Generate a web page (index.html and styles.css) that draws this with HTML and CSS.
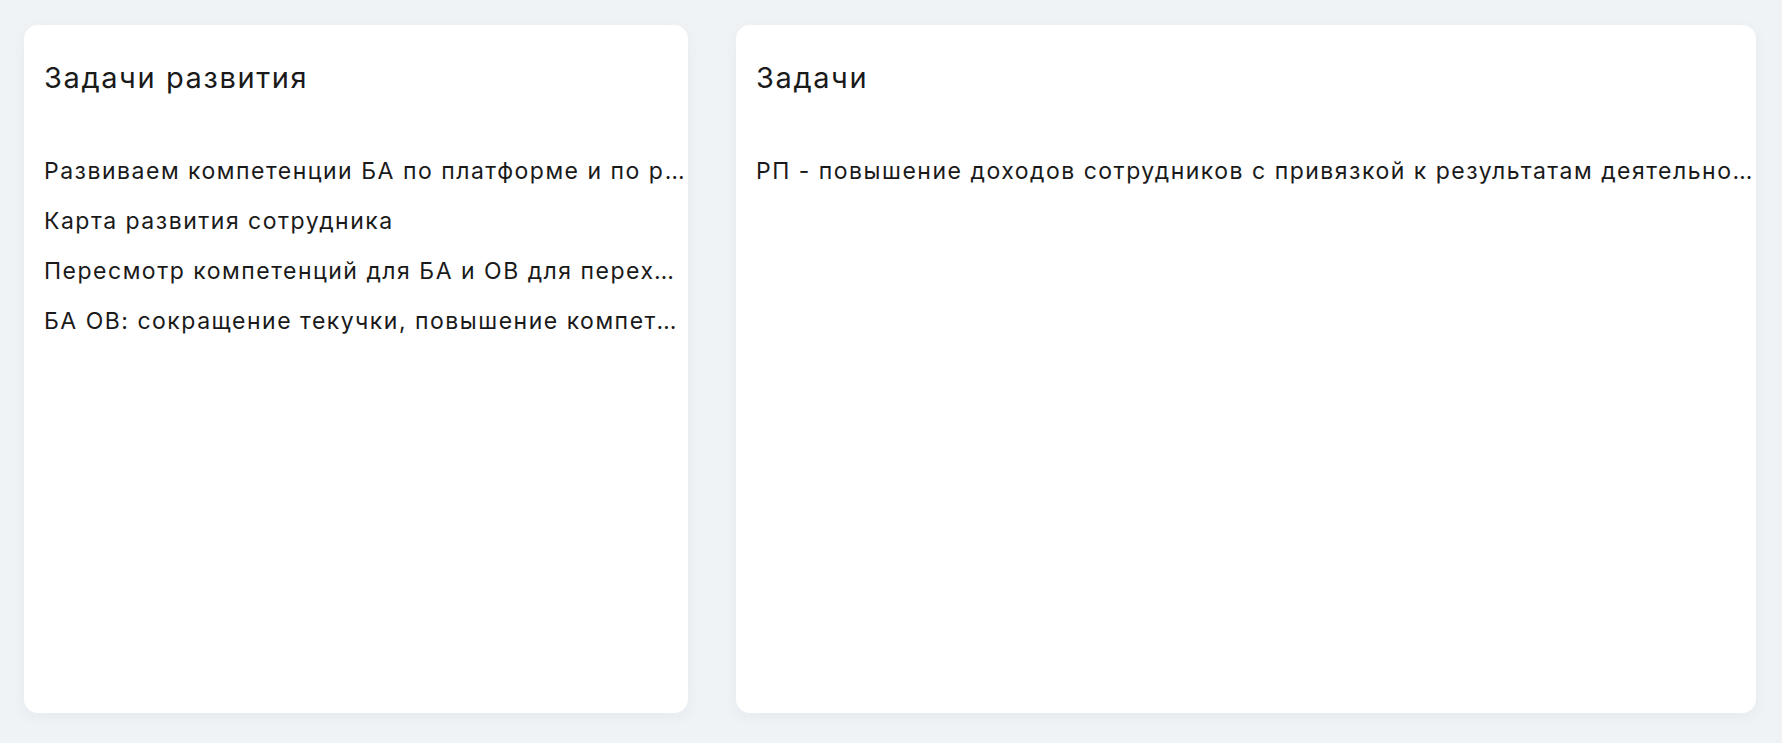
FILE: index.html
```html
<!DOCTYPE html>
<html lang="ru">
<head>
<meta charset="utf-8">
<title>Задачи</title>
<link rel="stylesheet" href="styles.css">
</head>
<body>
<main class="board">
  <section class="card">
    <h2 class="card-title">Задачи развития</h2>
    <ul class="task-list">
      <li class="task">Развиваем компетенции БА по платформе и по работе с требованиями заказчика</li>
      <li class="task">Карта развития сотрудника</li>
      <li class="task">Пересмотр компетенций для БА и ОВ для перехода на новую модель</li>
      <li class="task">БА ОВ: сокращение текучки, повышение компетенций и вовлечённости</li>
    </ul>
  </section>
  <section class="card">
    <h2 class="card-title">Задачи</h2>
    <ul class="task-list">
      <li class="task">РП - повышение доходов сотрудников с привязкой к результатам деятельности команды</li>
    </ul>
  </section>
</main>
</body>
</html>
```

FILE: styles.css
```css
* {
  box-sizing: border-box;
}

html,
body {
  margin: 0;
  height: 100%;
}

body {
  background: #f0f3f6;
  font-family: Inter, "Noto Sans", "Liberation Sans", sans-serif;
  color: #1a1a1a;
  -webkit-font-smoothing: antialiased;
}

.board {
  display: grid;
  grid-template-columns: 664px 1fr;
  gap: 48px;
  padding: 25px 26px 30px 24px;
  height: 100%;
}

.card {
  background: #ffffff;
  border-radius: 14px;
  box-shadow: 0 4px 14px rgba(30, 45, 70, 0.05);
  padding: 34px 0 20px 20px;
  min-width: 0;
  overflow: hidden;
}

.card-title {
  margin: 0;
  font-size: 29px;
  line-height: 38px;
  font-weight: 400;
  letter-spacing: 1.6px;
}

.task-list {
  list-style: none;
  margin: 49px 0 0;
  padding: 0;
}

.task {
  font-size: 23px;
  line-height: 50px;
  letter-spacing: 1.5px;
  white-space: nowrap;
  overflow: hidden;
  text-overflow: ellipsis;
}
```
